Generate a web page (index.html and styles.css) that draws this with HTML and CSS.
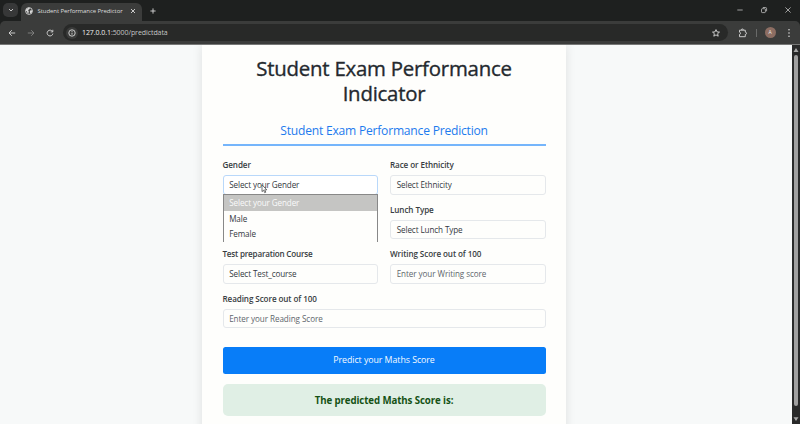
FILE: index.html
```html
<!DOCTYPE html>
<html lang="en">
<head>
<meta charset="utf-8">
<title>Student Performance Predictor</title>
<link rel="stylesheet" href="styles.css">
</head>
<body>
<div class="browser">
  <header class="tabs">
    <span class="tab-search"><svg width="8" height="8" viewBox="0 0 8 8"><path d="M2 3l2 2 2-2"/></svg></span>
    <div class="tab">
      <svg class="globe" width="8" height="8" viewBox="0 0 8 8"><circle cx="4" cy="4" r="3.4"/><path class="land" d="M1 2.5L3.5.8 5 1.2 4.2 2.5 3 3 3.8 4.2 3.4 6.8 2.3 5.8 2 4.3.8 3.8zM5 3.5l2.3-.3-.3 2L5.3 6.5 4.8 5z"/></svg>
      <span class="tab-title">Student Performance Predictor</span>
      <svg class="tab-close" width="8" height="8" viewBox="0 0 8 8"><path d="M2 2l4 4M6 2l-4 4"/></svg>
    </div>
    <svg class="new-tab" width="8" height="8" viewBox="0 0 8 8"><path d="M4 1.4v5.2M1.4 4h5.2"/></svg>
    <div class="window-controls">
      <svg width="8" height="8" viewBox="0 0 8 8"><path d="M1.3 4h5.4"/></svg>
      <svg width="8" height="8" viewBox="0 0 8 8"><rect x="1.5" y="2.7" width="3.9" height="3.9" rx=".8"/><path d="M2.8 1.5h2.7q1.1 0 1.1 1.1v2.7"/></svg>
      <svg width="8" height="8" viewBox="0 0 8 8"><path d="M1.4 1.4l5.2 5.2M6.6 1.4L1.4 6.6"/></svg>
    </div>
  </header>
  <nav class="toolbar">
    <div class="nav-icons">
      <svg width="10" height="10" viewBox="0 0 10 10"><path d="M8.2 5H2M4.8 2.2L2 5l2.8 2.8"/></svg>
      <svg class="dim" width="10" height="10" viewBox="0 0 10 10"><path d="M1.8 5H8M5.2 2.2L8 5 5.2 7.8"/></svg>
      <svg width="10" height="10" viewBox="0 0 10 10"><path d="M7.5 3.5A2.9 2.9 0 1 0 7.9 5.6M7.8 1.8v2.1H5.7"/></svg>
    </div>
    <div class="address">
      <span class="site-info"><svg width="10" height="10" viewBox="0 0 10 10"><circle cx="5" cy="5" r="3.2"/><path d="M5 4.7v2M5 3v.9"/></svg></span>
      <span class="url">127.0.0.1<span class="url-path">:5000/predictdata</span></span>
      <svg class="star" width="10" height="10" viewBox="0 0 10 10"><path d="M5 1.6l1 2.3 2.5.2-1.9 1.6.6 2.5L5 6.9 2.8 8.2l.6-2.5-1.9-1.6L4 3.9z"/></svg>
    </div>
    <svg class="extensions" width="10" height="10" viewBox="0 0 10 10"><path d="M1.500 2.200h5.800v1.900q1.200.1 1.200 1.200T7.300 6.500v2.200H1.500V6.500q1-.2 1-1.200t-1-1.200zM3.400 1.900q0-.9 1-.9t1 .9"/></svg>
    <span class="divider"></span>
    <span class="avatar">A</span>
    <svg class="more" width="6" height="10" viewBox="0 0 6 10"><circle cx="3" cy="1.800" r=".8"/><circle cx="3" cy="5" r=".8"/><circle cx="3" cy="8.200" r=".8"/></svg>
  </nav>
  <div class="viewport">
    <main class="page">
      <section class="card">
        <h1>Student Exam Performance<br>Indicator</h1>
        <h2>Student Exam Performance Prediction</h2>
        <form class="form">
          <div class="field gender"><label>Gender</label><div class="control active">Select your Gender
            <div class="options"><div class="option selected">Select your Gender</div><div class="option">Male</div><div class="option">Female</div></div>
            <svg class="cursor" width="7" height="10" viewBox="0 0 7 10"><path d="M1 .8v6.800l1.600-1.400 1.100 2.500 1.100-.5-1.100-2.400h2.100z"/></svg>
          </div></div>
          <div class="field"><label>Race or Ethnicity</label><div class="control">Select Ethnicity</div></div>
          <div class="field lunch"><label>Lunch Type</label><div class="control">Select Lunch Type</div></div>
          <div class="field"><label class="tight">Test preparation Course</label><div class="control">Select Test_course</div></div>
          <div class="field"><label>Writing Score out of 100</label><div class="control placeholder">Enter your Writing score</div></div>
          <div class="field wide"><label>Reading Score out of 100</label><div class="control placeholder">Enter your Reading Score</div></div>
        </form>
        <div class="submit">Predict your Maths Score</div>
        <div class="result">The predicted Maths Score is:</div>
      </section>
    </main>
    <aside class="scrollbar">
      <svg width="8" height="10" viewBox="0 0 8 10"><path d="M4 3L6.500 7h-5z"/></svg>
      <span class="thumb"></span>
      <svg width="8" height="10" viewBox="0 0 8 10"><path d="M4 7L6.500 3.300h-5z"/></svg>
    </aside>
  </div>
</div>
</body>
</html>
```
FILE: styles.css
```css
* { box-sizing: border-box; }
body { margin: 0; font-family: "Open Sans", "Noto Sans", sans-serif; }
svg { display: block; flex: none; fill: none; stroke: #d8d8d8; stroke-width: .9; }
.browser { width: 800px; height: 424px; overflow: hidden; background: #1e201f; display: flex; flex-direction: column; }

.tabs { height: 21px; flex: none; display: flex; padding: 3px 8px 0 3px; }
.tab-search { width: 15px; height: 14px; border-radius: 5px; background: #373838; display: grid; place-items: center; }
.tab { width: 121px; height: 18px; margin-left: 3px; padding: 0 5px 2px 4px; border-radius: 6px 6px 0 0; background: #3b3c3b; display: flex; align-items: center; }
.globe .land { fill: #d8d8d8; stroke: none; }
.tab-title { margin-left: 4.500px; font-size: 6px; line-height: 10px; letter-spacing: -.07px; white-space: nowrap; color: #dedede; }
.tab-close { margin-left: auto; }
.new-tab { margin: 3.500px 0 0 6.500px; }
.window-controls { display: flex; gap: 16px; margin: 3px 0 0 auto; }
.window-controls svg { stroke-width: .7; }

.toolbar { height: 24px; flex: none; display: flex; align-items: center; background: #3b3c3b; border-radius: 5px 5px 0 0; border-bottom: 1px solid #777877; }
.nav-icons { display: flex; gap: 9px; margin-left: 6.500px; }
.dim { stroke: #858585; }
.address { width: 665px; height: 17px; margin-left: 8px; padding: 0 7px 0 3px; border-radius: 9px; background: #282928; display: flex; align-items: center; }
.site-info { width: 12px; height: 12px; border-radius: 6px; background: #3b3c3b; display: grid; place-items: center; }
.url { margin-left: 4.500px; padding-top: 1px; font-size: 7px; line-height: 10px; letter-spacing: -.07px; color: #f0f0f0; white-space: nowrap; }
.url-path { color: #c4c5c5; }
.star { margin-left: auto; }
.extensions { margin-left: 10px; }
.divider { width: 1px; height: 8px; margin-left: 8px; background: #696a69; }
.avatar { width: 11px; height: 11px; margin-left: 8px; border-radius: 50%; background: #8d6e63; color: #eee; font-size: 5px; line-height: 11px; text-align: center; }
.more { margin-left: 10.500px; }
.more circle { fill: #d8d8d8; stroke: none; }

.viewport { flex: 1; display: flex; min-height: 0; }
.page { width: 792px; padding-left: 202px; overflow: hidden; background: #f7f9f9; }
.card { width: 364px; height: 400px; padding: 11px 20.500px 0; background: #fefefc; box-shadow: 0 0 10px rgba(0, 0, 0, .1); color: #212529; }
h1 { margin: 0; font-size: 20.400px; line-height: 25px; font-weight: 500; letter-spacing: -.23px; text-align: center; white-space: nowrap; color: #24292e; -webkit-text-stroke: .35px #24292e; }
h2 { height: 28px; margin: 12px 0 0; padding-top: 5px; border-bottom: 2px solid #75b5fb; font-size: 12.100px; line-height: 16px; letter-spacing: -.22px; font-weight: 400; text-align: center; color: #1d7bee; }
.form { display: grid; grid-template-columns: 1fr 1fr; column-gap: 12px; padding-top: 13px; grid-auto-rows: 44.500px; }
.field { min-width: 0; }
.field label { display: block; height: 16px; font-size: 8.100px; line-height: 12px; letter-spacing: -.09px; font-weight: 600; color: #383d42; white-space: nowrap; }
.field .tight { letter-spacing: -.2px; }
.control { position: relative; height: 19.700px; padding-left: 5.700px; border: 1px solid #e5e8eb; border-radius: 3px; font-size: 8.100px; line-height: 18.500px; letter-spacing: -.1px; color: #34393e; white-space: nowrap; }
.active { border-color: #b9d8fa; background: #fff; }
.placeholder { letter-spacing: -.07px; color: #60666c; }
.lunch { grid-column: 2; }
.wide { grid-column: 1 / 3; }
.options { position: absolute; z-index: 1; top: 18px; left: -1px; width: 155.500px; height: 48px; overflow: hidden; border: solid #888; border-width: 1px 1px 0; background: #fefefc; }
.option { height: 15.600px; padding-left: 5.700px; line-height: 16px; }
.selected { background: #c5c5c3; color: #fafafa; }
.cursor { position: absolute; z-index: 2; top: 8px; left: 37px; fill: #fff; stroke: #333; stroke-width: .7; }
.submit { height: 27px; margin-top: 10px; border-radius: 2.500px; background: #087df8; color: #f5faff; font-size: 8.800px; line-height: 27px; letter-spacing: -.05px; text-align: center; }
.result { height: 32px; margin-top: 10px; border-radius: 5px; background: #e0efe5; color: #155215; font-size: 9.700px; line-height: 33px; letter-spacing: -.1px; font-weight: 700; text-align: center; }

.scrollbar { width: 8px; background: #292a2a; display: flex; flex-direction: column; align-items: center; }
.scrollbar svg { fill: #a8a8a8; stroke: none; }
.thumb { width: 4.500px; height: 351px; margin-bottom: 8px; border-radius: 3px; background: #a0a0a0; }
```
